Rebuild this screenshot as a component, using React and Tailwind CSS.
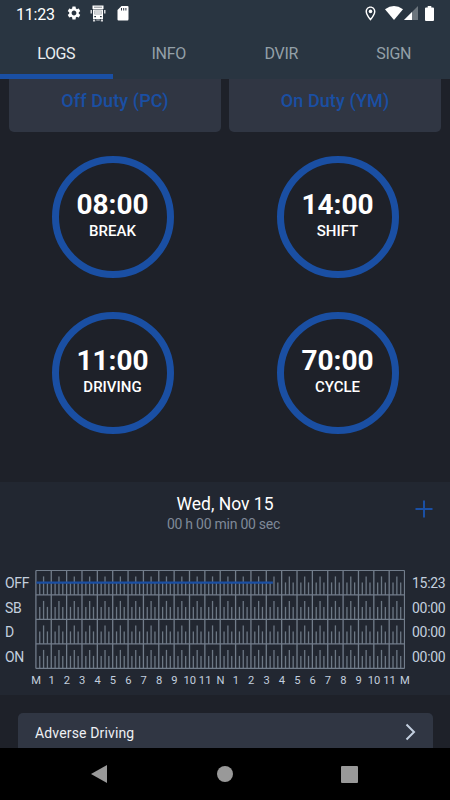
import React from "react";
import { MdSettings, MdOutlineLocationOn } from "react-icons/md";

const TABS = ["LOGS", "INFO", "DVIR", "SIGN"];

const TIMERS = [
  { value: "08:00", label: "BREAK" },
  { value: "14:00", label: "SHIFT" },
  { value: "11:00", label: "DRIVING" },
  { value: "70:00", label: "CYCLE" },
];

const ROWS = [
  { label: "OFF", total: "15:23" },
  { label: "SB", total: "00:00" },
  { label: "D", total: "00:00" },
  { label: "ON", total: "00:00" },
];

const HOURS = ["M", "1", "2", "3", "4", "5", "6", "7", "8", "9", "10", "11", "N", "1", "2", "3", "4", "5", "6", "7", "8", "9", "10", "11", "M"];

const HOUR_W = 15.36;
const ROW_H = 24.5;

function TruckIcon() {
  return (
    <svg width="16" height="17" viewBox="0 0 16 17" fill="#fff">
      <path d="M2.500 .500H13.500V4H2.500Z" />
      <path d="M4 2.200H12" stroke="#2a3440" strokeWidth=".6" />
      <path fillRule="evenodd" d="M3 4.500H13V14H3ZM4.300 5.800V9.300H11.700V5.800ZM4.300 11V12.300H6V11ZM10 11V12.300H11.700V11Z" />
      <path d="M.500 5H2V8.500H.500ZM14 5H15.500V8.500H14ZM3 14.500H5.200V16.500H3ZM10.800 14.500H13V16.500H10.800ZM6.200 14.500H9.800V15.500H6.200ZM4.300 5.800H11.700V9.300H4.300Z" opacity=".8" />
    </svg>
  );
}

function StatusBar() {
  return (
    <div className="flex h-7 items-center pl-4 pr-4 text-white">
      <span className="w-[50px] pt-px text-[16px] leading-7 tracking-[-0.2px]">11:23</span>
      <MdSettings className="mb-0.5 size-4" />
      <span className="mb-px ml-[8px]"><TruckIcon /></span>
      <svg className="mb-px ml-[11px]" width="12" height="15" viewBox="0 0 12 15">
        <path d="M4.500 0H10.500Q11.500 0 11.500 1V13Q11.500 14.500 10.500 14.500H1.500Q.5 14.500 .5 13.500V4Z" fill="#fff" />
        <path d="M4.500 2V4.500M6.700 2V4.500M8.900 2V4.500" stroke="#2a3440" strokeWidth="1" />
      </svg>
      <div className="flex-1" />
      <MdOutlineLocationOn className="mb-0.5 h-[17px] w-[17px]" />
      <svg className="mb-0.5 ml-[6px]" width="18" height="14" viewBox="0 0 18 14">
        <path d="M0 3.200Q9-3 18 3.200L9 14Z" fill="#fff" />
      </svg>
      <svg className="mb-0.5 ml-px" width="14" height="14" viewBox="0 0 14 14">
        <path d="M14 0V14H0Z" fill="#6c757d" />
        <path d="M8 6V14H0Z" fill="#fff" />
      </svg>
      <svg className="mb-0.5 ml-[7px]" width="9" height="15" viewBox="0 0 9 15">
        <path d="M2.700 0H6.300V1.500H8Q9 1.500 9 2.500V14Q9 15 8 15H1Q0 15 0 14V2.500Q0 1.500 1 1.500H2.700Z" fill="#fff" />
      </svg>
    </div>
  );
}

function Timer({ value, label }) {
  return (
    <div className="flex h-[122px] w-[122px] flex-col items-center rounded-full border-[7px] border-[#1a4fa3] pt-[25px] text-white">
      <span className="text-[28px] font-bold leading-[34px]">{value}</span>
      <span className="text-[15px] font-medium leading-[18px]">{label}</span>
    </div>
  );
}

function LogChart() {
  const w = HOUR_W * 24;
  const h = ROW_H * 4;
  const ticks = [];
  for (let r = 0; r < 4; r++) {
    const bottom = (r + 1) * ROW_H;
    for (let i = 0; i < 24; i++) {
      for (let q = 1; q < 4; q++) {
        const x = i * HOUR_W + (q * HOUR_W) / 4;
        ticks.push(<path key={`${r}-${i}-${q}`} d={`M${x} ${bottom}V${bottom - (q === 2 ? 18.5 : 12.5)}`} />);
      }
    }
  }
  return (
    <svg className="shrink-0" width="370" height="100" viewBox="-0.9 -0.4 370 100" fill="none">
      <g stroke="#6c7784" strokeWidth="1.3">{ticks}</g>
      <g stroke="#727d8b" strokeWidth="1.3">
        {HOURS.map((_, i) => <path key={i} d={`M${i * HOUR_W} 0V${h}`} />)}
        {[0, 1, 2, 3, 4].map((r) => <path key={r} d={`M0 ${r * ROW_H}H${w}`} />)}
      </g>
      <path d="M0.500 12.300H237" stroke="#1a4fa3" strokeWidth="2.300" />
    </svg>
  );
}

export default function App() {
  return (
    <div className="flex h-[800px] w-[450px] flex-col overflow-hidden bg-[#1e2129] font-[Roboto,sans-serif]">
      <header className="h-[79px] shrink-0 bg-[#293541]">
        <StatusBar />
        <nav className="grid h-[51px] grid-cols-4">
          {TABS.map((tab, i) => (
            <div
              key={tab}
              className={
                i === 0
                  ? "border-b-[5px] border-[#1a4fa3] pt-[5px] text-center text-[16px] leading-[41px] tracking-[-0.4px] text-[#e9edf0]"
                  : "border-b-[5px] border-transparent pt-[5px] text-center text-[16px] leading-[41px] tracking-[-0.3px] text-[#94a0a8]"
              }
            >
              {tab}
            </div>
          ))}
        </nav>
      </header>

      <main className="flex h-[669px] shrink-0 flex-col overflow-hidden">
        <div className="flex h-[53px] shrink-0 gap-2 px-[9px] text-center text-[18px] font-medium leading-[44px] tracking-[0.1px] text-[#1a4fa3]">
          <div className="flex-1 rounded-b-[5px] bg-[#303643]">Off Duty (PC)</div>
          <div className="flex-1 rounded-b-[5px] bg-[#303643]">On Duty (YM)</div>
        </div>

        <div className="grid h-[350px] shrink-0 grid-cols-2 content-start justify-items-center gap-y-[34px] pt-[24px]">
          {TIMERS.map((t) => <Timer key={t.label} {...t} />)}
        </div>

        <section className="flex h-[213px] shrink-0 flex-col bg-[#222731]">
          <div className="grid h-[88px] grid-cols-[50px_1fr_50px] text-center">
            <div />
            <div className="pt-[11px]">
              <div className="text-[17.5px] leading-[22px] text-white">Wed, Nov 15</div>
              <div className="pr-[3px] text-[14px] leading-[19px] tracking-[-0.25px] text-[#7f8998]">00 h 00 min 00 sec</div>
            </div>
            <svg className="ml-[15px] mt-[18px]" width="18" height="18" viewBox="0 0 18 18">
              <path d="M9 0.500V17.500M0.500 9H17.500" stroke="#1a4fa3" strokeWidth="2" />
            </svg>
          </div>
          <div className="flex h-[100px] pl-[5px] text-[14px] leading-[24.5px] tracking-[-0.3px] text-[#c3cfdf]">
            <div className="w-[30px] shrink-0 pt-px">
              {ROWS.map((r) => <div key={r.label}>{r.label}</div>)}
            </div>
            <LogChart />
            <div className="ml-[7px] pt-px">
              {ROWS.map((r) => <div key={r.label}>{r.total}</div>)}
            </div>
          </div>
          <div className="ml-[28.500px] flex h-6 text-[11.2px] leading-[21px] text-[#c3cfdf]">
            {HOURS.map((h, i) => <div key={i} className="w-[15.360px] shrink-0 text-center">{h}</div>)}
          </div>
        </section>

        <div className="mx-[17.500px] mt-[17.500px] flex h-[60px] shrink-0 justify-between rounded-[5px] bg-[#303643] pl-[17.500px] pr-[17px] text-[14px] leading-[40px] tracking-[0.15px] text-[#eef0f3]">
          <span>Adverse Driving</span>
          <svg className="mt-[10px]" width="11" height="18" viewBox="0 0 11 18" fill="none">
            <path d="M1.500 1.500L9 9L1.500 16.500" stroke="#c3cfdf" strokeWidth="2" />
          </svg>
        </div>
      </main>

      <footer className="flex h-[52px] shrink-0 items-center justify-between bg-black pl-[91px] pr-[92px]">
        <svg width="16" height="18" viewBox="0 0 16 18"><path d="M16 0V18L0 9Z" fill="#999" /></svg>
        <div className="ml-0.5 size-4 rounded-full bg-[#999]" />
        <div className="size-[17px] rounded-[1px] bg-[#999]" />
      </footer>
    </div>
  );
}
